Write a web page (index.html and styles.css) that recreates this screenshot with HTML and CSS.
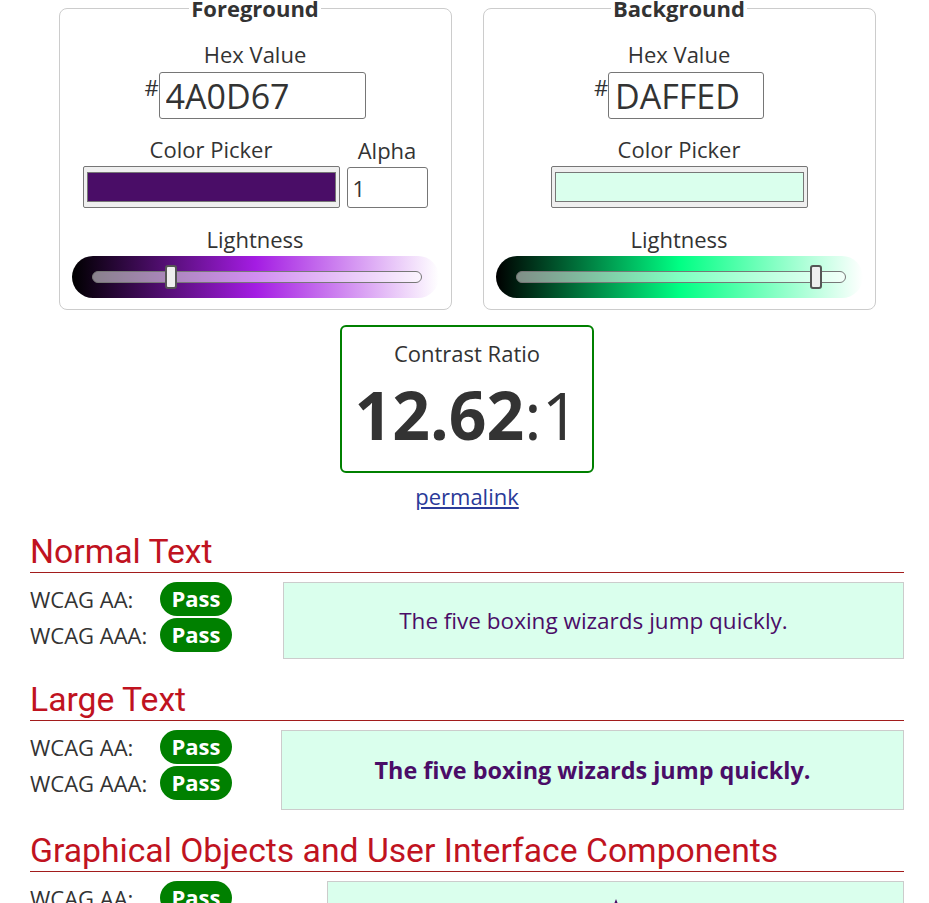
FILE: index.html
```html
<!DOCTYPE html>
<html lang="en">
<head>
<meta charset="utf-8">
<title>Contrast Checker</title>
<link rel="stylesheet" href="styles.css">
</head>
<body>
<main class="page">
  <div class="pickers">
    <fieldset class="color-set">
      <legend>Foreground</legend>
      <div class="field">
        <label class="label" for="fg-hex">Hex Value</label>
        <div class="hex-row"><span class="hash">#</span><input id="fg-hex" class="hex-input hex-fg" type="text" value="4A0D67"></div>
      </div>
      <div class="picker-row">
        <div class="field">
          <label class="label" for="fg-color">Color Picker</label>
          <input id="fg-color" class="color-input" type="color" value="#4a0d67">
        </div>
        <div class="field">
          <label class="label" for="fg-alpha">Alpha</label>
          <input id="fg-alpha" class="alpha-input" type="text" value="1">
        </div>
      </div>
      <div class="field light-field">
        <label class="label" for="fg-light">Lightness</label>
        <div class="slider slider-fg"><input id="fg-light" class="range" type="range" min="0" max="100" value="23"></div>
      </div>
    </fieldset>
    <fieldset class="color-set">
      <legend>Background</legend>
      <div class="field">
        <label class="label" for="bg-hex">Hex Value</label>
        <div class="hex-row"><span class="hash">#</span><input id="bg-hex" class="hex-input hex-bg" type="text" value="DAFFED"></div>
      </div>
      <div class="picker-row">
        <div class="field">
          <label class="label" for="bg-color">Color Picker</label>
          <input id="bg-color" class="color-input" type="color" value="#daffed">
        </div>
      </div>
      <div class="field light-field">
        <label class="label" for="bg-light">Lightness</label>
        <div class="slider slider-bg"><input id="bg-light" class="range" type="range" min="0" max="100" value="93"></div>
      </div>
    </fieldset>
  </div>

  <div class="ratio-box">
    <div class="ratio-title">Contrast Ratio</div>
    <div class="ratio-value"><strong>12.62</strong>:1</div>
  </div>
  <div class="permalink-wrap"><a class="permalink" href="#">permalink</a></div>

  <section class="result-section">
    <h2 class="section-title">Normal Text</h2>
    <div class="result">
      <div class="criteria crit-normal">
        <div class="crit"><span class="crit-label">WCAG AA:</span><span class="badge">Pass</span></div>
        <div class="crit"><span class="crit-label">WCAG AAA:</span><span class="badge">Pass</span></div>
      </div>
      <div class="sample sample-normal">The five boxing wizards jump quickly.</div>
    </div>
  </section>

  <section class="result-section">
    <h2 class="section-title">Large Text</h2>
    <div class="result">
      <div class="criteria crit-large">
        <div class="crit"><span class="crit-label">WCAG AA:</span><span class="badge">Pass</span></div>
        <div class="crit"><span class="crit-label">WCAG AAA:</span><span class="badge">Pass</span></div>
      </div>
      <div class="sample sample-large">The five boxing wizards jump quickly.</div>
    </div>
  </section>

  <section class="result-section section-graphic">
    <h2 class="section-title">Graphical Objects and User Interface Components</h2>
    <div class="result">
      <div class="criteria crit-graphic">
        <div class="crit"><span class="crit-label">WCAG AA:</span><span class="badge">Pass</span></div>
      </div>
      <div class="sample sample-graphic">
        <svg class="star" width="40" height="40" viewBox="0 0 40 40" aria-hidden="true"><polygon points="20,1 25,14 39,15 28,24 32,38 20,30 8,38 12,24 1,15 15,14" fill="#4A0D67"/></svg>
      </div>
    </div>
  </section>
</main>
</body>
</html>
```

FILE: styles.css
```css
* { box-sizing: border-box; }
html, body { margin: 0; padding: 0; background: #fff; }
body {
  font-family: "Open Sans", "DejaVu Sans", sans-serif;
  font-size: 22px;
  line-height: 30px;
  color: #333;
}

.page {
  width: 874px;
  margin: -7px 0 0 30px;
}

.pickers {
  display: flex;
  justify-content: center;
  gap: 31px;
}

.color-set {
  width: 393px;
  min-width: 0;
  margin: 0;
  padding: 16px 12px 11px;
  border: 1px solid #ccc;
  border-radius: 8px;
  display: flex;
  flex-direction: column;
  align-items: center;
}

.color-set legend {
  margin: 0 auto;
  padding: 0 2px;
  font-weight: 700;
  font-size: 22px;
  line-height: 30px;
  color: #333;
}

.field {
  display: flex;
  flex-direction: column;
  align-items: center;
}

.label {
  display: block;
  margin-bottom: 2px;
}

.hex-row {
  display: flex;
  align-items: flex-start;
  margin-top: 1px;
}

.hash {
  font-size: 22px;
  line-height: 30px;
}

.hex-input {
  height: 47px;
  margin: 0;
  padding: 0 6px;
  border: 1px solid #767676;
  border-radius: 3px;
  font-family: "Open Sans", sans-serif;
  font-size: 34px;
  color: #333;
  background: #fff;
}
.hex-fg { width: 207px; }
.hex-bg { width: 156px; }

.picker-row {
  display: flex;
  align-items: flex-end;
  gap: 7px;
  margin-top: 15px;
}

.color-input {
  display: block;
  width: 257px;
  height: 42px;
  margin: 0;
  padding: 1px 2px;
  border: 1px solid #767676;
  border-radius: 2px;
  background: #efefef;
  cursor: pointer;
}
.color-input::-webkit-color-swatch-wrapper { padding: 4px 1px; }
.color-input::-webkit-color-swatch { border: 1px solid #777; border-radius: 0; }

.alpha-input {
  display: block;
  width: 81px;
  height: 41px;
  margin: 0;
  padding: 0 5px;
  border: 1px solid #767676;
  border-radius: 3px;
  font-family: "Open Sans", sans-serif;
  font-size: 22px;
  color: #333;
  background: #fff;
}

.light-field { margin-top: 16px; }

.slider {
  width: 367px;
  height: 42px;
  padding-left: 20px;
  border-radius: 21px;
}
.slider-fg { background: linear-gradient(to right, #000 0%, hsl(281, 78%, 50%) 50%, #fff 100%); }
.slider-bg { background: linear-gradient(to right, #000 0%, hsl(151, 100%, 50%) 50%, #fff 100%); }

.range {
  -webkit-appearance: none;
  appearance: none;
  display: block;
  width: 330px;
  height: 42px;
  margin: 0;
  background: transparent;
}
.range::-webkit-slider-runnable-track {
  height: 12px;
  border: 1px solid #777;
  border-radius: 6px;
  background: rgba(255, 255, 255, 0.5);
}
.range::-webkit-slider-thumb {
  -webkit-appearance: none;
  width: 12px;
  height: 24px;
  margin-top: -7px;
  background: #eee;
  border: 2px solid #555;
  border-radius: 3px;
}

.ratio-box {
  width: 254px;
  margin: 15px auto 0;
  padding: 11px 0 11px;
  border: 2px solid #008000;
  border-radius: 6px;
  text-align: center;
}
.ratio-value {
  font-size: 66px;
  line-height: 92px;
}
.ratio-value strong { font-weight: 700; }

.permalink-wrap {
  margin-top: 8px;
  text-align: center;
}
.permalink {
  color: #2a3a99;
  text-decoration: underline;
}

.result-section { margin-top: 22px; }

.section-title {
  margin: 0;
  padding-bottom: 2px;
  border-bottom: 1px solid #a21c1c;
  font-family: Roboto, "Liberation Sans", sans-serif;
  font-weight: 400;
  font-size: 33.7px;
  line-height: 37px;
  color: #c0131f;
}

.result {
  display: flex;
  align-items: flex-start;
  margin-top: 9px;
}

.criteria {
  display: flex;
  flex-direction: column;
  gap: 2px;
  flex: none;
}
.crit-normal { width: 253px; }
.crit-large { width: 251px; }
.crit-graphic { width: 297px; }

.crit {
  display: flex;
  align-items: center;
  height: 34px;
}
.crit-label { width: 130px; }

.badge {
  width: 72px;
  height: 34px;
  border-radius: 17px;
  background: #008000;
  color: #fff;
  font-weight: 700;
  line-height: 33px;
  text-align: center;
}

.sample {
  flex: 1;
  display: flex;
  align-items: center;
  justify-content: center;
  background: #DAFFED;
  border: 1px solid #ccc;
  color: #4A0D67;
}
.sample-normal {
  height: 77px;
  font-size: 22.5px;
}
.sample-large {
  height: 80px;
  font-weight: 700;
  font-size: 23.4px;
}
.sample-graphic {
  height: 150px;
  align-items: flex-start;
  padding-top: 16px;
}
.star { display: block; }
```
